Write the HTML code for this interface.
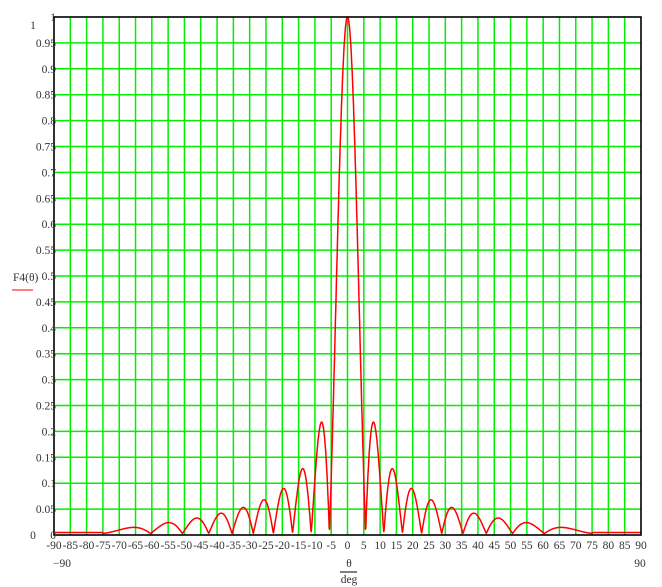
<!DOCTYPE html>
<html><head><meta charset="utf-8"><style>
html,body{margin:0;padding:0;background:#fff;}
svg{display:block;font-family:"Liberation Serif",serif;font-size:11.5px;}
</style></head><body>
<svg id="s" width="662" height="587" xmlns="http://www.w3.org/2000/svg">
<g id="grid" stroke="#00f000" stroke-width="1.5"></g>
<path id="curve" fill="none" stroke="#ff0000" stroke-width="1.5" stroke-linejoin="round"/>
<rect x="54" y="17" width="587" height="518" fill="none" stroke="#000" stroke-width="1.6"/>
<g id="lab" fill="#333"></g>
<text x="33" y="29" fill="#333" text-anchor="middle">1</text>
<text x="33" y="539" fill="#333" text-anchor="middle">0</text>
<text x="13" y="281" fill="#333">F4(θ)</text>
<line x1="12" y1="290" x2="33" y2="290" stroke="#ff0000" stroke-width="1"/>
<text x="62" y="567" fill="#333" text-anchor="middle">−90</text>
<text x="640" y="567" fill="#333" text-anchor="middle">90</text>
<text x="349" y="567" fill="#333" text-anchor="middle">θ</text>
<line x1="340" y1="572" x2="357" y2="572" stroke="#000" stroke-width="1"/>
<text x="349" y="583" fill="#333" text-anchor="middle">deg</text>
</svg>
<script>
var L=54,R=641,T=17,B=535,W=R-L,H=B-T,ns="http://www.w3.org/2000/svg";
var g=document.getElementById('grid'),lab=document.getElementById('lab');
function el(n,a,p){var e=document.createElementNS(ns,n);for(var k in a)e.setAttribute(k,a[k]);p.appendChild(e);return e;}
for(var i=1;i<36;i++){var x=L+W*i/36;el('line',{x1:x,y1:T,x2:x,y2:B},g);}
for(var j=1;j<20;j++){var y=T+H*j/20;el('line',{x1:L,y1:y,x2:R,y2:y},g);}
for(var j=0;j<=20;j++){var y=B-H*j/20;var v=(j*0.05).toFixed(2).replace(/0+$/,'').replace(/\.$/,'');
 var t=el('text',{x:L+2,y:y+4,'text-anchor':'end'},lab);t.textContent=v;}
for(var i=0;i<=36;i++){var d=-90+5*i;var x=L+W*i/36;var t=el('text',{x:x,y:549,'text-anchor':'middle'},lab);t.textContent=(d<0?'-':'')+Math.abs(d);}
var N=20,k=0.5175,pts=[];
for(var i=0;i<=1800;i++){var deg=-90+i*0.1;var th=deg*Math.PI/180;var s=Math.sin(th);var h=Math.PI*k*s;var f;
 if(Math.abs(Math.sin(h))<1e-9)f=1;else f=Math.abs(Math.sin(N*h)/(N*Math.sin(h)));
 f*=Math.pow(Math.max(Math.cos(th),0),1.6);
 if(Math.abs(deg)>75)f=0.002;
 var x=L+W*i/1800,y=B-1.5-f*(H-1.5);pts.push(x.toFixed(1)+','+y.toFixed(1));}
document.getElementById('curve').setAttribute('d','M'+pts.join('L'));
</script>
</body></html>
